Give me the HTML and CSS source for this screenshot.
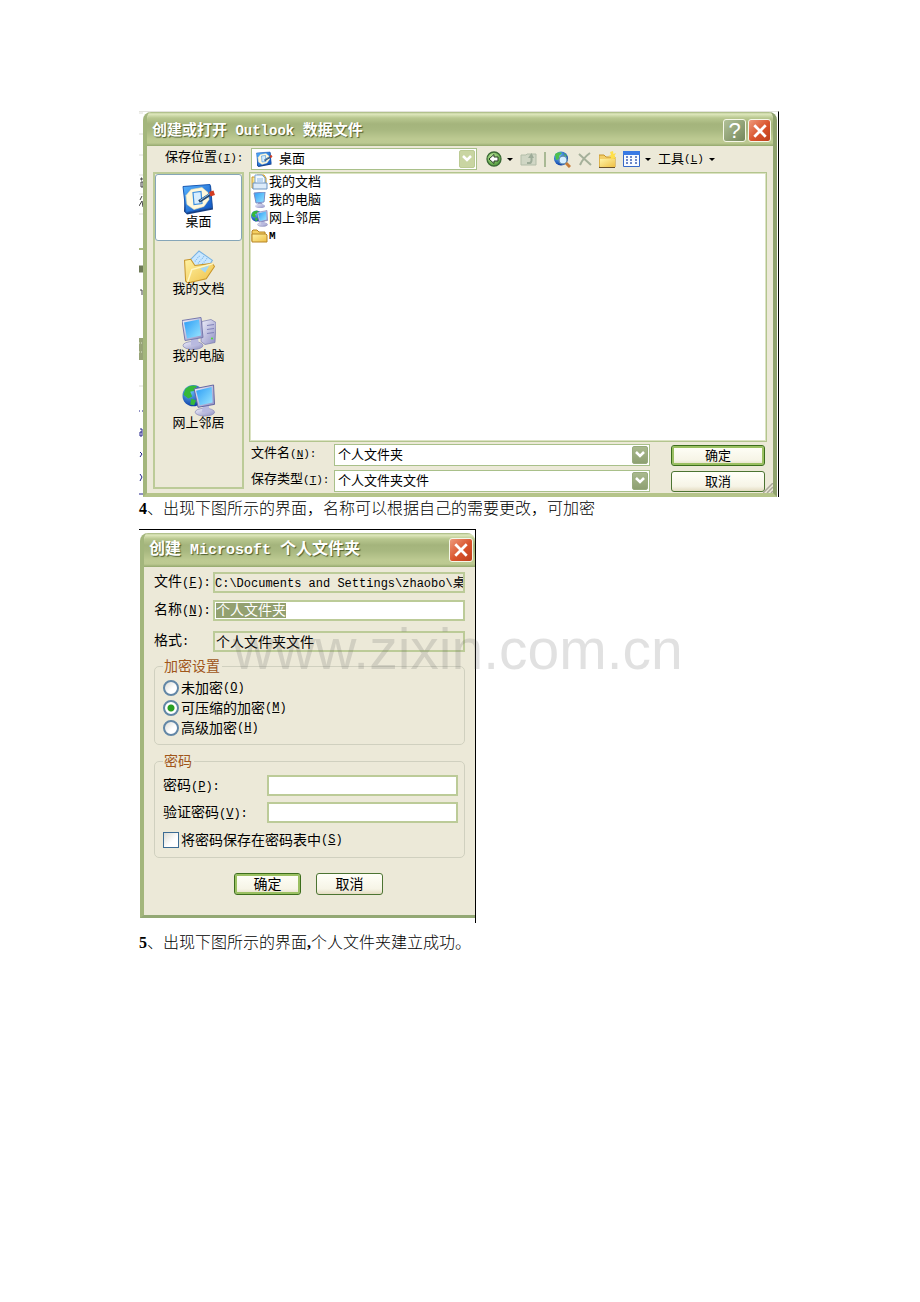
FILE: index.html
```html
<!DOCTYPE html>
<html lang="zh-CN">
<head>
  <meta charset="UTF-8" />
  <meta name="viewport" content="width=device-width, initial-scale=1.0"/>
  <title>Outlook 数据文件</title>
  <link rel="stylesheet" href="styles.css">
</head>
<body>
  <svg class="sprite" width="0" height="0" aria-hidden="true">
    <defs>
      <linearGradient id="gBlue" x1="0" y1="0" x2="1" y2="1"><stop offset="0" stop-color="#58b4ff"/><stop offset="1" stop-color="#0a4fc0"/></linearGradient>
      <linearGradient id="gScreen" x1="0" y1="0" x2="1" y2="1"><stop offset="0" stop-color="#2b9cf5"/><stop offset="1" stop-color="#9be6ff"/></linearGradient>
      <linearGradient id="gGrey" x1="0" y1="0" x2="1" y2="1"><stop offset="0" stop-color="#f0f0fb"/><stop offset="1" stop-color="#8f90c4"/></linearGradient>
      <linearGradient id="gFolder" x1="0" y1="0" x2="1" y2="1"><stop offset="0" stop-color="#fff3a5"/><stop offset="1" stop-color="#eebf45"/></linearGradient>
      <radialGradient id="gGlobe" cx=".35" cy=".3" r=".75"><stop offset="0" stop-color="#6cc4ff"/><stop offset="1" stop-color="#0634a0"/></radialGradient>
      <radialGradient id="gBack" cx=".4" cy=".35" r=".7"><stop offset="0" stop-color="#c5efa2"/><stop offset="1" stop-color="#469232"/></radialGradient>
    </defs>
    <symbol id="desktop" viewBox="0 0 34 32">
      <path d="M3 3 29 2 31 26 5 31 2 28Z" fill="#163f84"/>
      <path d="M1 3 28 1 30 24 4 29Z" fill="url(#gBlue)" stroke="#1b5bb5"/>
      <path d="M9 6 20 4 26 9 27 16 22 23 12 26 5 21 4 12Z" fill="#fff8dc" stroke="#e6dfb2" stroke-width=".6"/>
      <path d="M11 9 19 8 20 20 12 21Z" fill="#d7eeff" stroke="#3b8ede" stroke-width="1.2"/>
      <path d="M17 18 28 11" stroke="#2a496e" stroke-width="3"/>
      <path d="M18 17 28 10" stroke="#7cbcf2"/>
      <path d="M28 9 31 8 32 11 29 12Z" fill="#d33b22" stroke="#d33b22" stroke-width="1.5"/>
    </symbol>
    <symbol id="docs" viewBox="0 0 32 32">
      <path d="M7 10 16 1 29 10 20 24 8 19Z" fill="#c9e7ff" stroke="#78b2e2"/>
      <path d="M12 11 17 5M15 13 21 6M18 15 24 8" stroke="#76b4e8" stroke-dasharray="1 1"/>
      <path d="M2 10 8 9 12 15 29 13 31 16 23 28 5 32 3 30Z" fill="url(#gFolder)" stroke="#c8962b"/>
      <path d="M5 31 9 19 30 13" fill="none" stroke="#fff7c4" stroke-width="1.5"/>
      <path d="M17 18 26 15 22 22Z" fill="#a5d7f2"/>
    </symbol>
    <symbol id="computer" viewBox="0 0 34 32">
      <path d="M20 4 29 2 34 5 33 25 23 27 19 24Z" fill="url(#gGrey)" stroke="#7779ac" stroke-width=".7"/>
      <path d="M25 8 32 7M25 12 32 11M25 16 32 15" stroke="#8183b8" stroke-width="1.2"/>
      <circle cx="30" cy="21" r="1" fill="#4ade28"/>
      <ellipse cx="11" cy="28" rx="10" ry="4" fill="url(#gGrey)" stroke="#8587b5" stroke-width=".7"/>
      <path d="M9 21 16 20 17 28 9 28Z" fill="#b8b9df"/>
      <path d="M0 3 19 0 21 20 3 23Z" fill="url(#gGrey)" stroke="#7779ac"/>
      <path d="M2 5 17 2 19 18 5 21Z" fill="url(#gScreen)"/>
    </symbol>
    <symbol id="network" viewBox="0 0 34 34">
      <circle cx="11" cy="12" r="11" fill="url(#gGlobe)"/>
      <path d="M3 5Q8 0 15 2L12 7 8 8 10 13 6 15 1 11ZM9 15 14 17 12 22 8 21Z" fill="#36b83a"/>
      <ellipse cx="23" cy="29" rx="10" ry="4" fill="url(#gGrey)" stroke="#8587b5" stroke-width=".7"/>
      <path d="M21 22 27 21 28 29 20 29Z" fill="#b8b9df"/>
      <path d="M12 5 32 1 33 21 16 24Z" fill="url(#gGrey)" stroke="#6264a0"/>
      <path d="M14 7 30 3 31 19 18 22Z" fill="url(#gScreen)"/>
    </symbol>
    <symbol id="chevron" viewBox="0 0 10 8"><path d="M1 1 5 5 9 1" fill="none" stroke="#fff" stroke-width="2.5"/></symbol>
    <symbol id="cross" viewBox="0 0 14 14"><path d="M2 2 12 12M12 2 2 12" fill="none" stroke="#fff" stroke-width="2.4"/></symbol>
  </svg>

  <main class="page">
    <div class="shot shot-open">
      <svg class="sliver" viewBox="0 0 4 385" preserveAspectRatio="none" aria-hidden="true">
        <path d="M0 1H4M0 22H4M0 43H4M0 63H4M0 82H4M0 102H4M0 274H4" stroke="#deded8"/>
        <path d="M2 66H3V68H2ZM2 70H4V75H2ZM1 88 3 84M0 94 3 89 4 95M1 178H3V183" fill="none" stroke="#444"/>
        <path d="M0 137H4" stroke="#a9b983" stroke-width="2"/>
        <path d="M0 157H4" stroke="#6e7a58" stroke-width="7"/>
        <path d="M0 237H4" stroke="#98a478" stroke-width="22"/>
        <path d="M0 231H3M0 240H3" stroke="#dde3cb" stroke-dasharray="1 1"/>
        <path d="M0 299H1M3 299H4M1 317H3V324H1V320H3M1 340 3 342 1 345M1 362 3 365 1 369M0 382H4" fill="none" stroke="#22228a"/>
      </svg>
      <section class="window">
        <header class="titlebar">
          <h1>创建或打开<span class="latin"> Outlook </span>数据文件</h1>
          <button class="caption help" aria-label="帮助">?</button>
          <button class="caption close" aria-label="关闭"><svg width="16" height="16"><use href="#cross"/></svg></button>
        </header>
        <div class="open-body">
          <label class="lookin-label" for="lookin">保存位置<span class="key">(<u>I</u>):</span></label>
          <div class="toolbar">
            <div class="combo lookin">
              <svg class="combo-icon" width="17" height="17"><use href="#desktop"/></svg>
              <select id="lookin"><option>桌面</option></select>
              <span class="drop light"><svg width="10" height="8"><use href="#chevron"/></svg></span>
            </div>
            <button class="tool has-arrow" aria-label="后退">
              <svg width="16" height="16" viewBox="0 0 16 16"><circle cx="8" cy="8" r="7" fill="url(#gBack)" stroke="#3b6a35" stroke-width="1.3"/><path d="M3 8 8 3.500V6H12V10H8V12.500Z" fill="#fff" stroke="#263d24"/></svg>
            </button>
            <button class="tool" aria-label="向上一级">
              <svg width="17" height="16" viewBox="0 0 17 16"><path d="M1 4H6L7 3H16V14H1Z" fill="#d0d6c4" stroke="#b2bda8"/><path d="M7 12H10Q12 11 11.500 7" fill="none" stroke="#9eac99" stroke-width="2"/><path d="M8 7 11.500 2 14 7Z" fill="#9eac99"/></svg>
            </button>
            <span class="divider"></span>
            <button class="tool" aria-label="搜索 Web">
              <svg width="18" height="17" viewBox="0 0 18 17"><circle cx="8" cy="7.500" r="7" fill="url(#gGlobe)"/><path d="M2 3Q6 0 9 2L6 5 7 8 3 9ZM11 2 14 5 12 6Z" fill="#4fc04c"/><circle cx="10" cy="9" r="4" fill="#d7f0ff" stroke="#628cb0" stroke-width="1.3"/><path d="M13 12 17 16" stroke="#c57b38" stroke-width="3"/></svg>
            </button>
            <button class="tool" aria-label="删除">
              <svg width="14" height="14" viewBox="0 0 14 14"><path d="M1 2 13 13M12 1Q5 6 2 13" fill="none" stroke="#a5b09a" stroke-width="2"/></svg>
            </button>
            <button class="tool" aria-label="新建文件夹">
              <svg width="17" height="17" viewBox="0 0 17 17"><path d="M0 4H5L7 6H16V16H0Z" fill="#f3cf68" stroke="#c8962b"/><path d="M1 8H16V16H1Z" fill="url(#gFolder)"/><path d="M14 0 14.500 3 17 2 15.500 5 17 8 14 7 12 9 12 6 9 5 12 4 11 1Z" fill="#ffe04a"/><path d="M0 16.500H16" stroke="#69512b"/></svg>
            </button>
            <button class="tool has-arrow" aria-label="视图">
              <svg width="17" height="16" viewBox="0 0 17 16"><path d="M.5.500H16.500V15.500H.5Z" fill="#f8fbff" stroke="#3769c8"/><path d="M0 2H17" stroke="#397ae4" stroke-width="4"/><path d="M3 6H5M7 6H9M12 6H14M3 9H5M7 9H9M12 9H14M3 12H5M7 12H9M12 12H14" stroke="#3e62b5" stroke-width="1.600"/></svg>
            </button>
            <button class="tool has-arrow">工具<span class="key">(<u>L</u>)</span></button>
          </div>

          <nav class="places">
            <button class="place active"><svg width="34" height="33"><use href="#desktop"/></svg>桌面</button>
            <button class="place"><svg width="34" height="33"><use href="#docs"/></svg>我的文档</button>
            <button class="place"><svg width="34" height="33"><use href="#computer"/></svg>我的电脑</button>
            <button class="place"><svg width="34" height="33"><use href="#network"/></svg>网上邻居</button>
          </nav>

          <ul class="files">
            <li><svg width="17" height="16" viewBox="0 0 17 16"><path d="M1 3H6V1H13L15 4V14H1Z" fill="url(#gFolder)" stroke="#c8962b"/><path d="M4 1H11L14 4V11H4Z" fill="#f4faff" stroke="#78a6d8"/><path d="M6 5H12M6 7H12" stroke="#87b5e4"/><path d="M2 9H16V15H2Z" fill="#dcebfa" stroke="#6e95c1"/></svg>我的文档</li>
            <li><svg width="17" height="16" viewBox="0 0 17 16"><path d="M3 1 14 0 13 10 5 11Z" fill="url(#gScreen)" stroke="#7a8cc4"/><path d="M7 11H11L12 13H6Z" fill="#9799c5"/><ellipse cx="9" cy="14" rx="5" ry="2" fill="url(#gGrey)"/></svg>我的电脑</li>
            <li><svg width="17" height="17"><use href="#network"/></svg>网上邻居</li>
            <li><svg width="17" height="16" viewBox="0 0 17 16"><path d="M1 13V3L2 2H6L8 4H14V7" fill="#f4cf62" stroke="#b68527"/><path d="M1 14V6H15L16 7V14Z" fill="url(#gFolder)" stroke="#b68527"/></svg><b class="key">M</b></li>
          </ul>

          <form class="save">
            <label for="filename">文件名<span class="key">(<u>N</u>):</span></label>
            <div class="combo">
              <select id="filename"><option>个人文件夹</option></select>
              <span class="drop"><svg width="10" height="8"><use href="#chevron"/></svg></span>
            </div>
            <button type="button" class="btn default">确定</button>
            <label for="filetype">保存类型<span class="key">(<u>T</u>):</span></label>
            <div class="combo">
              <select id="filetype"><option>个人文件夹文件</option></select>
              <span class="drop"><svg width="10" height="8"><use href="#chevron"/></svg></span>
            </div>
            <button type="button" class="btn">取消</button>
          </form>
        </div>
        <svg class="grip" width="10" height="10" viewBox="0 0 10 10" aria-hidden="true"><path d="M0 10 10 0M4 10 10 4M8 10 10 8" stroke="#aaa89a" stroke-width="1.500"/></svg>
      </section>
    </div>

    <p class="step"><b>4</b>、出现下图所示的界面，名称可以根据自己的需要更改，可加密</p>

    <div class="shot shot-create">
      <section class="window">
        <header class="titlebar">
          <h2>创建<span class="latin"> Microsoft </span>个人文件夹</h2>
          <button class="caption close" aria-label="关闭"><svg width="16" height="16"><use href="#cross"/></svg></button>
        </header>
        <form class="create-body">
          <div class="row">
            <label for="path">文件<span class="key">(<u>F</u>):</span></label>
            <input id="path" class="path" type="text" value="C:\Documents and Settings\zhaobo\桌面" readonly>
          </div>
          <div class="row">
            <label for="name">名称<span class="key">(<u>N</u>):</span></label>
            <div class="field"><span class="selected" id="name" role="textbox" contenteditable="true">个人文件夹</span></div>
          </div>
          <div class="row format">
            <label for="format">格式<span class="key">:</span></label>
            <input id="format" type="text" value="个人文件夹文件" readonly>
          </div>

          <fieldset class="encrypt">
            <legend>加密设置</legend>
            <label><input type="radio" name="enc">未加密<span class="key">(<u>O</u>)</span></label>
            <label><input type="radio" name="enc" checked>可压缩的加密<span class="key">(<u>M</u>)</span></label>
            <label><input type="radio" name="enc">高级加密<span class="key">(<u>H</u>)</span></label>
          </fieldset>

          <fieldset class="password">
            <legend>密码</legend>
            <div class="row">
              <label for="pw">密码<span class="key">(<u>P</u>):</span></label>
              <input id="pw" type="password">
            </div>
            <div class="row">
              <label for="pw2">验证密码<span class="key">(<u>V</u>):</span></label>
              <input id="pw2" type="password">
            </div>
            <label><input type="checkbox">将密码保存在密码表中<span class="key">(<u>S</u>)</span></label>
          </fieldset>

          <div class="actions">
            <button type="button" class="btn default">确定</button>
            <button type="button" class="btn">取消</button>
          </div>
        </form>
      </section>
      <div class="watermark">www.zixin.com.cn</div>
    </div>

    <p class="step last"><b>5</b>、出现下图所示的界面<b>,</b>个人文件夹建立成功。</p>
  </main>
</body>
</html>
```
FILE: styles.css
```css
* { box-sizing: border-box; }
body { margin: 0; background: #fff; color: #000; font: 13px/18px "Liberation Sans", "Noto Sans CJK SC", sans-serif; }
button, input, select { font: inherit; color: inherit; margin: 0; }
button { padding: 0; border: 0; background: none; }
svg { display: block; flex: none; }
.sprite { position: absolute; }
.page { padding: 111px 141px 60px 139px; }

.step { margin: 0; font: 300 16px/24px "Liberation Serif", "Noto Sans CJK SC", serif; color: #000; }
.step b { font-weight: 700; }
.last { margin-top: 8px; }
.key { font-family: "Liberation Mono", monospace; font-size: 11px; }
.latin { font-family: "Liberation Mono", monospace; }

/* window frame */
.shot { position: relative; display: flex; }
.shot-open { border-top: 1px solid #e4e4de; border-right: 1px solid #000; padding-right: 1px; }
.sliver { width: 4px; height: 385px; }
.window { position: relative; flex: 1; min-width: 0; background: #ece9d8; border: solid #b5c48a; border-width: 0 4px 4px; border-left-color: #a3b67c; border-right-color: #8fa26d; border-radius: 8px 8px 0 0; overflow: hidden; }
.titlebar { display: flex; align-items: center; gap: 2px; height: 34px; margin: 0 -4px; padding: 3px 6px 0 9px; background: linear-gradient(#a3b57d 0, #dfe8bd 2px, #b8c78f 6px, #a4b47c 12px, #a8b880 18px, #bdca92 27px, #bcc991 31px, #94a86d 34px); }
.titlebar h1, .titlebar h2 { flex: 1; margin: 0; color: #fff; font-size: 15px; line-height: 20px; font-weight: 700; white-space: nowrap; text-shadow: 1px 1px 1px #4c5c2c; }
.titlebar .latin { font-size: 14px; }
.caption { display: flex; align-items: center; justify-content: center; width: 23px; height: 23px; border: 1px solid #f5f7e8; border-radius: 3px; color: #fff; font: 22px/20px "Liberation Sans", sans-serif; }
.help { background: linear-gradient(135deg, #b1c198, #75875b); }
.close { background: linear-gradient(135deg, #ee9a7c, #d9532c 55%, #bd3f1b); }

/* open dialog */
.open-body { display: grid; grid-template-columns: 91px 1fr; grid-template-rows: 26px 270px auto; column-gap: 5px; padding: 0 6px; }
.lookin-label { padding: 2px 0 0 12px; white-space: nowrap; }
.toolbar { display: flex; align-items: center; gap: 7px; padding-left: 2px; min-width: 0; white-space: nowrap; }
.combo { display: flex; align-items: center; height: 22px; background: #fff; border: 1px solid #a9c08a; }
.combo select { flex: 1; min-width: 0; width: 100%; height: 20px; padding: 0 0 0 3px; border: 0; background: none; appearance: none; }
.lookin { width: 226px; margin-right: 2px; }
.combo-icon { margin-left: 4px; }
.lookin select { padding-left: 6px; }
.drop { display: flex; align-items: center; justify-content: center; flex: none; width: 16px; height: 18px; margin: 1px; border-radius: 2px; background: linear-gradient(#a9b98d, #8ea072); border: 1px solid #98ab7d; pointer-events: none; }
.drop.light { background: #c9d5a2; border-color: #bccb94; }
.tool { display: flex; align-items: center; height: 22px; }
.has-arrow::after { content: ""; margin: 0 0 0 5px; border: solid transparent; border-width: 3px 3px 0; border-top-color: #000; }
.divider { width: 2px; height: 15px; background: #a9b994; }

.places { grid-row: 2 / 4; height: 317px; padding: 0; border: 2px solid #bccb98; }
.place { display: flex; flex-direction: column; align-items: center; width: 100%; height: 67px; padding-top: 9px; border-radius: 3px; white-space: nowrap; }
.place svg { margin-bottom: -3px; }
.place.active { background: #fff; border: 1px solid #86a6b8; padding-top: 8px; }
.files { margin: 0; padding: 0 1px; list-style: none; background: #fff; border: 1px solid #b3c58e; outline: 1px solid #dbe2c2; outline-offset: -2px; }
.files li { display: flex; align-items: center; gap: 1px; height: 18px; }
.save { display: grid; grid-template-columns: 78px minmax(0, 316px) 1fr; column-gap: 5px; row-gap: 4px; padding: 2px 2px 0; align-items: center; white-space: nowrap; }
.save label { height: 22px; line-height: 18px; }
.save .btn { width: 94px; justify-self: end; }
.btn { height: 21px; border: 1px solid #4c7432; border-radius: 3px; background: linear-gradient(#fffff8, #f6f4e6 75%, #e4dcc2); line-height: 17px; text-align: center; }
.btn.default { border-color: #3c6e1c; box-shadow: inset 0 0 0 2px #9bc062; }
.grip { position: absolute; right: 0; bottom: 0; }

/* create dialog */
.shot-create { max-width: 337px; margin-top: 8px; padding: 3px 0 5px 1px; border-top: 1px solid #000; border-right: 1px solid #000; }
.shot-create .window { font-size: 14px; border-right-width: 0; border-bottom: 3px solid #93a874; }
.shot-create .key { font-size: 12px; }
.shot-create .titlebar { margin-right: 0; padding: 0 2px 0 9px; }
.shot-create h2 { font-size: 16px; }
.shot-create h2 .latin { font-size: 15px; }
.shot-create .caption { width: 24px; height: 24px; }
.create-body { padding: 1px 10px 20px; }
.row { display: flex; align-items: center; height: 28px; white-space: nowrap; }
.row label { flex: none; width: 59px; }
.row input, .field { flex: 1; min-width: 0; height: 21px; padding: 0 1px; border: 2px solid #bccb98; background: #fff; line-height: 17px; }
.row input[readonly] { background: #ece9d8; }
.row .path { padding: 0; font-family: "Liberation Mono", "Noto Sans CJK SC", monospace; font-size: 12px; }
.field { padding: 1px; line-height: 15px; }
.selected { display: inline-block; height: 15px; background: #93a070; color: #fff; outline: 0; }
.format { margin-top: 3px; }
fieldset { margin: 0; padding: 0 6px 0 8px; border: 1px solid #d0d0bf; border-radius: 5px; min-width: 0; }
legend { padding: 0 2px 0 1px; color: #a0561a; line-height: 18px; }
fieldset > label { display: flex; align-items: center; height: 20px; white-space: nowrap; }
.encrypt { margin-top: 2px; padding-bottom: 6px; }
.encrypt legend + label { margin-top: 3px; }
.password { margin-top: 7px; padding-bottom: 7px; }
.password .row { height: 27px; }
.password .row label { width: 104px; }
.password legend + .row { margin-top: 2px; }
.password > label { margin-top: 4px; }
input[type="radio"], input[type="checkbox"] { appearance: none; flex: none; width: 16px; height: 16px; margin-right: 2px; border: 2px solid #6287a6; background: linear-gradient(135deg, #dcdcd4, #fff 60%); }
input[type="radio"] { border-radius: 50%; }
input[type="radio"]:checked { background: radial-gradient(circle, #28a022 3px, #fff 4px); }
input[type="checkbox"] { border-width: 1px; border-color: #3c6c94; }
.actions { display: flex; justify-content: center; gap: 15px; margin-top: 15px; padding-right: 2px; }
.actions .btn { width: 67px; height: 22px; }
.watermark { position: absolute; left: 94px; top: 87px; color: rgba(90, 90, 90, .18); font: 57px/64px "Liberation Sans", sans-serif; white-space: nowrap; pointer-events: none; }
```
